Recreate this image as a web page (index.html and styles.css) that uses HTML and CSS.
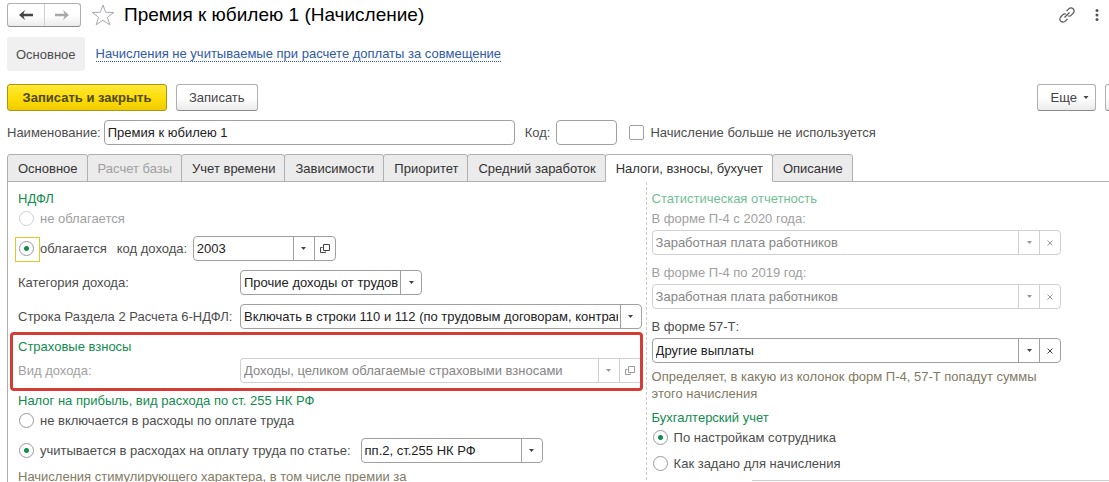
FILE: index.html
```html
<!DOCTYPE html>
<html lang="ru">
<head>
<meta charset="utf-8">
<title>Премия к юбилею 1 (Начисление)</title>
<link rel="stylesheet" href="styles.css">
</head>
<body>
<svg class="sprite" aria-hidden="true">
  <symbol id="caret" viewBox="0 0 5 3"><path d="M0 0h5L2.5 3z" fill="currentColor"/></symbol>
  <symbol id="open" viewBox="0 0 10 10"><path d="M3.500.5h6v6h-6zM2.500 3.500h-2v5h5v-1" fill="none" stroke="currentColor"/></symbol>
  <symbol id="clear" viewBox="0 0 6 6"><path d="M.5.5l5 5M5.500.5l-5 5" fill="none" stroke="currentColor"/></symbol>
</svg>
<header class="titlebar">
  <div class="history">
    <button type="button" class="history-btn" aria-label="Назад"><svg width="14" height="10" viewBox="0 0 14 10"><path d="M0 5L6 0L4.500 3.700H14V6.300H4.500L6 10z" fill="currentColor"/></svg></button>
    <button type="button" class="history-btn history-next" aria-label="Вперед"><svg width="14" height="10" viewBox="0 0 14 10"><path d="M14 5L8 0L9.500 3.700H0V6.300H9.500L8 10z" fill="currentColor"/></svg></button>
  </div>
  <button type="button" class="plain" aria-label="В избранное"><svg width="24" height="22" viewBox="0 0 24 22"><path d="M12 1L14.700 8.300L22.800 8.500L16.400 13.200L18.800 20.800L12 16.300L5.200 20.800L7.600 13.200L1.200 8.500L9.300 8.300z" fill="#fff" stroke="#a9a9b0"/></svg></button>
  <h1 class="title">Премия к юбилею 1 (Начисление)</h1>
  <button type="button" class="plain link-btn" aria-label="Получить ссылку"><svg width="16" height="16" viewBox="0 0 16 16" fill="none" stroke="#555" stroke-width="1.200"><path d="M7.500 4L10 1.600Q12 0 14.200 1.800Q16 4 14.400 6L12 8.400Q10.500 9.500 9.200 8.800M8.500 12L6 14.400Q4 16 1.800 14.200Q0 12 1.600 10L4 7.600Q5.500 6.500 6.800 7.200M5.500 10.500L10.500 5.500"/></svg></button>
  <button type="button" class="plain" aria-label="Меню"><svg width="4" height="12" viewBox="0 0 4 12" fill="#555"><circle cx="2" cy="1.500" r="1.500"/><circle cx="2" cy="6" r="1.500"/><circle cx="2" cy="10.500" r="1.500"/></svg></button>
</header>
<nav class="sections">
  <span class="section-current">Основное</span>
  <a class="section-link" href="#">Начисления не учитываемые при расчете доплаты за совмещение</a>
</nav>
<div class="commands">
  <button type="button" class="btn btn-primary">Записать и закрыть</button>
  <button type="button" class="btn">Записать</button>
  <button type="button" class="btn btn-more">Еще <svg width="6" height="3"><use href="#caret"/></svg></button>
  <button type="button" class="btn btn-help" aria-label="Справка"></button>
</div>
<div class="identity">
  <label for="name">Наименование:</label>
  <input id="name" class="box name" type="text" value="Премия к юбилею 1">
  <label for="code">Код:</label>
  <input id="code" class="box code" type="text">
  <label class="check"><input class="tick" type="checkbox">Начисление больше не используется</label>
</div>
<div class="tabs" role="tablist">
  <button type="button" class="tab" role="tab">Основное</button>
  <button type="button" class="tab" role="tab" disabled>Расчет базы</button>
  <button type="button" class="tab" role="tab">Учет времени</button>
  <button type="button" class="tab" role="tab">Зависимости</button>
  <button type="button" class="tab" role="tab">Приоритет</button>
  <button type="button" class="tab" role="tab">Средний заработок</button>
  <button type="button" class="tab tab-active" role="tab" aria-selected="true">Налоги, взносы, бухучет</button>
  <button type="button" class="tab" role="tab">Описание</button>
</div>
<main class="panel">
  <section class="left">
    <h2 class="group">НДФЛ</h2>
    <label class="check muted tight"><input class="dot" type="radio" name="ndfl" disabled>не облагается</label>
    <div class="row">
      <label class="check check-focus"><input class="dot" type="radio" name="ndfl" checked>облагается</label>
      <label class="code-label" for="income">код дохода:</label>
      <div class="combo combo-code"><input id="income" type="text" value="2003"><button type="button" aria-label="Выбрать"><svg width="5" height="3"><use href="#caret"/></svg></button><button type="button" aria-label="Открыть"><svg width="10" height="10"><use href="#open"/></svg></button></div>
    </div>
    <div class="row">
      <label class="caption" for="category">Категория дохода:</label>
      <div class="combo combo-mid"><input id="category" type="text" value="Прочие доходы от трудовой деятельности"><button type="button" aria-label="Выбрать"><svg width="5" height="3"><use href="#caret"/></svg></button></div>
    </div>
    <div class="row">
      <label class="caption" for="line">Строка Раздела 2 Расчета 6-НДФЛ:</label>
      <div class="combo combo-fill"><input id="line" type="text" value="Включать в строки 110 и 112 (по трудовым договорам, контрактам)"><button type="button" aria-label="Выбрать"><svg width="5" height="3"><use href="#caret"/></svg></button></div>
    </div>
    <div class="marked">
      <h2 class="group">Страховые взносы</h2>
      <div class="row tight">
        <label class="caption muted" for="kind">Вид дохода:</label>
        <div class="combo combo-fill combo-off"><input id="kind" type="text" value="Доходы, целиком облагаемые страховыми взносами" disabled><button type="button" disabled aria-label="Выбрать"><svg width="5" height="3"><use href="#caret"/></svg></button><button type="button" disabled aria-label="Открыть"><svg width="10" height="10"><use href="#open"/></svg></button></div>
      </div>
    </div>
    <h2 class="group">Налог на прибыль, вид расхода по ст. 255 НК РФ</h2>
    <label class="check tight"><input class="dot" type="radio" name="profit">не включается в расходы по оплате труда</label>
    <div class="row">
      <label class="check article"><input class="dot" type="radio" name="profit" checked>учитывается в расходах на оплату труда по статье:</label>
      <div class="combo combo-mid"><input type="text" aria-label="Статья расходов" value="пп.2, ст.255 НК РФ"><button type="button" aria-label="Выбрать"><svg width="5" height="3"><use href="#caret"/></svg></button></div>
    </div>
    <p class="hint">Начисления стимулирующего характера, в том числе премии за</p>
  </section>
  <section class="right">
    <h2 class="group group-off">Статистическая отчетность</h2>
    <label class="above muted tight" for="p4new">В форме П-4 с 2020 года:</label>
    <div class="combo combo-off tight"><input id="p4new" type="text" value="Заработная плата работников" disabled><button type="button" disabled aria-label="Выбрать"><svg width="5" height="3"><use href="#caret"/></svg></button><button type="button" disabled aria-label="Очистить"><svg width="6" height="6"><use href="#clear"/></svg></button></div>
    <label class="above muted" for="p4old">В форме П-4 по 2019 год:</label>
    <div class="combo combo-off tight"><input id="p4old" type="text" value="Заработная плата работников" disabled><button type="button" disabled aria-label="Выбрать"><svg width="5" height="3"><use href="#caret"/></svg></button><button type="button" disabled aria-label="Очистить"><svg width="6" height="6"><use href="#clear"/></svg></button></div>
    <label class="above" for="f57">В форме 57-Т:</label>
    <div class="combo tight"><input id="f57" type="text" value="Другие выплаты"><button type="button" aria-label="Выбрать"><svg width="5" height="3"><use href="#caret"/></svg></button><button type="button" aria-label="Очистить"><svg width="6" height="6"><use href="#clear"/></svg></button></div>
    <p class="hint">Определяет, в какую из колонок форм П-4, 57-Т попадут суммы этого начисления</p>
    <h2 class="group accounting">Бухгалтерский учет</h2>
    <label class="check tight"><input class="dot" type="radio" name="acc" checked>По настройкам сотрудника</label>
    <label class="check spaced"><input class="dot" type="radio" name="acc">Как задано для начисления</label>
    <div class="rule"></div>
  </section>
</main>
</body>
</html>
```

FILE: styles.css
```css
* { box-sizing: border-box; }

body {
  display: flex;
  flex-direction: column;
  height: 100vh;
  margin: 0;
  padding: 3px 0 0 7px;
  overflow: hidden;
  background: #fff;
  color: #4d4d4d;
  font: 13px/17px "Liberation Sans", Arial, sans-serif;
}

button, input { font: inherit; color: inherit; }
svg { display: block; flex: none; }
.sprite { position: absolute; width: 0; height: 0; }

.titlebar { display: flex; align-items: center; flex: none; height: 24px; padding-right: 10px; }
.history {
  display: flex;
  width: 74px;
  height: 24px;
  margin-right: 10px;
  border: 1px solid #b0b0b0;
  border-bottom-color: #8c8c8c;
  border-radius: 3px;
  background: linear-gradient(#fff 50%, #ececec);
}
.history-btn { display: flex; flex: 1; align-items: center; justify-content: center; padding: 0; border: 0; background: none; color: #444; }
.history-next { border-left: 1px solid #d0d0d0; color: #a8a8a8; }
.plain { padding: 0; border: 0; background: none; }
.title { margin: 0 0 0 9px; color: #000; font-size: 19px; line-height: 22px; font-weight: 400; }
.link-btn { margin: 0 20px 0 auto; }

.sections { display: flex; align-items: center; flex: none; margin-top: 10px; }
.section-current { padding: 9px 9px 8px; border-radius: 3px; background: #f0f0f0; }
.section-link { margin-left: 11px; border-bottom: 1px dotted #2f5aa8; color: #2f5aa8; line-height: 15px; text-decoration: none; }

.commands { display: flex; flex: none; gap: 9px; margin-top: 13px; overflow: hidden; }
.btn {
  display: flex;
  flex: none;
  align-items: center;
  justify-content: center;
  height: 27px;
  padding: 0 12px;
  border: 1px solid #b0b0b0;
  border-bottom-color: #8c8c8c;
  border-radius: 3px;
  background: linear-gradient(#fff 50%, #ebebeb);
  color: #444;
}
.btn-primary { width: 160px; border-color: #a99612; background: linear-gradient(#ffe838, #fbdc00 60%, #efcb00); color: #50480f; font-weight: 700; }
.btn-more { gap: 6px; margin-left: auto; padding: 0 6px 0 13px; }
.btn-help { width: 27px; margin-right: -23px; }

.identity { display: flex; align-items: center; flex: none; margin-top: 9px; }
.box { height: 25px; padding: 0 3px; border: 1px solid #a0a0a0; border-radius: 4px; background: #fff; color: #222; }
.name { width: 411px; margin: 0 10px 0 3px; }
.code { width: 61px; margin: 0 12px 0 6px; }
.check { display: flex; align-items: center; gap: 6px; }
.tick { appearance: none; width: 15px; height: 15px; margin: 0; border: 1px solid #a0a0a0; border-radius: 2px; background: #fff; }

.tabs { display: flex; flex: none; margin-top: 9px; }
.tab {
  height: 28px;
  margin: 0 0 -1px -1px;
  padding: 0 9px 0 10px;
  border: 1px solid #b0b0b0;
  border-radius: 3px 3px 0 0;
  background: #ebebeb;
  color: #333;
  white-space: nowrap;
}
.tab:first-child { margin-left: 0; }
.tab:disabled { color: #a0a0a0; }
.tab-active { z-index: 1; border-bottom-color: #fff; background: #fff; }

.panel { display: flex; flex: 1 0 auto; border: solid #b0b0b0; border-width: 1px 0 0 1px; }
.left { flex: 0 0 58%; padding: 8px 4px 0 10px; border-right: 1px dashed #ccc; }
.right { flex: 1; padding: 8px 48px 0 5px; }

.group { margin: 0; color: #118c4e; font-size: 13px; font-weight: 400; }
.group-off { color: #70c095; }
.muted { color: #a0a0a0; }
.row { display: flex; align-items: center; margin-top: 9px; }
.above { display: block; margin-top: 9px; }
.spaced { margin-top: 9px; }
.tight { margin-top: 3px; }
.caption { flex: 0 0 222px; white-space: nowrap; }
.code-label { width: 76px; margin-left: 10px; }
.article { margin-right: 10px; }

.dot { appearance: none; flex: none; width: 15px; height: 15px; margin: 0 0 0 1px; border: 1px solid #999; border-radius: 50%; background: #fff; }
.dot:checked { background: radial-gradient(circle, #118c4e 2px, #fff 3px); }
.dot:disabled { border-color: #d0d0d0; }
.check-focus { position: relative; }
.check-focus::before { content: ""; position: absolute; left: -3px; top: -3px; width: 23px; height: 23px; border: 1px solid #e0c828; }

.combo { display: flex; height: 25px; overflow: hidden; border: 1px solid #a0a0a0; border-radius: 4px; background: #fff; color: #222; }
.combo input { flex: 1; min-width: 0; margin-right: 2px; padding: 0 0 0 3px; border: 0; background: none; }
.combo button { display: flex; flex: 0 0 21px; align-items: center; justify-content: center; padding: 0; border: 0; border-left: 1px solid #a0a0a0; background: none; color: #444; }
.combo-off { border-color: #d0d0d0; color: #858585; }
.combo-off button { border-color: #d0d0d0; color: #999; }
.combo-code { width: 143px; }
.combo-mid { width: 182px; }
.combo-fill { flex: 1; min-width: 0; }

.marked { margin: 3px -1px 1px -8px; padding: 3px 0 5px 5px; border: 3px solid #d43d35; border-radius: 4px; }
.marked .combo { border-right: 0; border-radius: 4px 0 0 4px; }
.hint { margin: 5px 0 0; color: #827a64; }
.accounting { margin-top: 7px; }
.rule { margin: 8px -48px 0 100px; border-top: 1px solid #ccc; }
```
